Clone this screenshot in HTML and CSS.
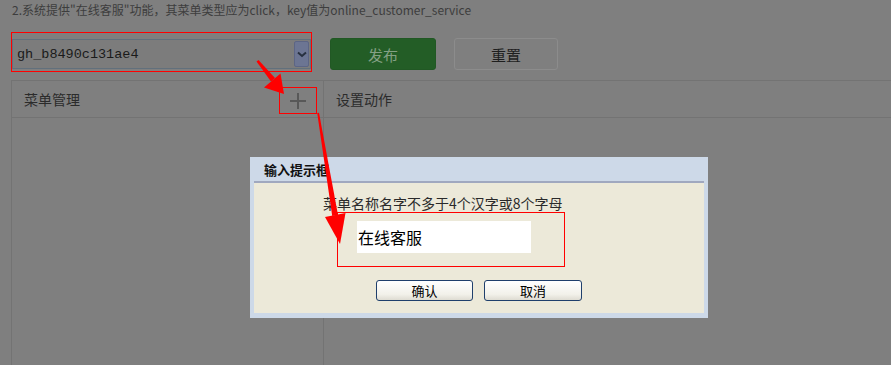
FILE: index.html
```html
<!DOCTYPE html>
<html lang="zh-CN">
<head>
<meta charset="utf-8">
<title>菜单管理</title>
<link rel="stylesheet" href="styles.css">
</head>
<body>
<p class="tip">2.系统提供"在线客服"功能，其菜单类型应为click，key值为online_customer_service</p>
<div class="toolbar">
  <div class="mark select-mark">
    <div class="select">
      <span class="select-value">gh_b8490c131ae4</span>
      <span class="drop"><svg width="10" height="7" viewBox="0 0 10 7"><path d="M1 1.5 L5 5 L9 1.5" fill="none" stroke="#27303f" stroke-width="2"/></svg></span>
    </div>
  </div>
  <button class="btn primary">发布</button>
  <button class="btn plain">重置</button>
</div>
<div class="panel">
  <div class="col left">
    <div class="col-head">
      <span>菜单管理</span>
      <span class="mark add-mark"><svg width="18" height="18" viewBox="0 0 18 18"><path d="M1 9 H17 M9 1 V17" stroke="#585858" stroke-width="2"/></svg></span>
    </div>
  </div>
  <div class="col right">
    <div class="col-head"><span>设置动作</span></div>
  </div>
</div>

<div class="dialog">
  <div class="dialog-title">输入提示框</div>
  <div class="dialog-body">
    <div class="prompt-text">菜单名称名字不多于4个汉字或8个字母</div>
    <div class="mark input-mark">
      <div class="input">在线客服</div>
    </div>
    <div class="dialog-actions">
      <button class="dbtn ok">确认</button>
      <button class="dbtn cancel">取消</button>
    </div>
  </div>
</div>

<svg class="arrows" width="891" height="365" viewBox="0 0 891 365">
  <polygon fill="#ff0000" points="256.5,61.5 258.5,60 275,78 271,81.5"/>
  <polygon fill="#ff0000" points="264,87.5 280.5,73.5 284,94"/>
  <polygon fill="#ff0000" points="317.2,113 319,112.8 338,215 332.2,216"/>
  <polygon fill="#ff0000" points="325,217 345.5,213 340,244"/>
</svg>
</body>
</html>
```

FILE: styles.css
```css
* { box-sizing: border-box; }

html, body {
  margin: 0;
  padding: 0;
  background: #7f7f7f;
  overflow: hidden;
}

body {
  width: 891px;
  height: 365px;
  position: relative;
  font-family: "Noto Sans CJK SC", "Noto Sans", sans-serif;
  color: #2a2a2a;
}

.tip {
  margin: 0;
  padding-left: 12px;
  height: 20px;
  line-height: 20px;
  font-size: 12px;
  color: #3d3d3d;
  white-space: nowrap;
}

.toolbar {
  display: flex;
  align-items: flex-start;
  gap: 18px;
  margin-top: 12px;
  padding-left: 11px;
  height: 40px;
}

.mark {
  border: 1px solid #ff0000;
}

.select-mark {
  width: 301px;
  height: 40px;
  padding: 6px 1px 2px 0;
}

.select {
  width: 299px;
  height: 30px;
  border: 1px solid #62707c;
  background: #7c7c7c;
  display: flex;
  align-items: center;
  justify-content: space-between;
  padding: 0 1px 0 4px;
}

.select-value {
  font-family: "Liberation Mono", monospace;
  font-size: 13.5px;
  color: #1a1a1a;
}

.drop {
  width: 15px;
  height: 26px;
  background: #6c7593;
  border: 1px solid #5c6585;
  border-radius: 2px;
  display: flex;
  align-items: center;
  justify-content: center;
}

.btn {
  margin-top: 6px;
  height: 32px;
  border-radius: 3px;
  font-family: "Noto Sans CJK SC", sans-serif;
  font-size: 15px;
  padding: 0;
}

.primary {
  width: 106px;
  background: #235d26;
  border: 1px solid #215824;
  color: #84a085;
}

.plain {
  width: 104px;
  background: #7f7f7f;
  border: 1px solid #8c8c8c;
  color: #1e1e1e;
}

.panel {
  margin-top: 8px;
  margin-left: 11px;
  height: 300px;
  border-top: 1px solid #737373;
  border-left: 1px solid #737373;
  display: flex;
}

.col {
  height: 100%;
}

.left {
  width: 312px;
  border-right: 1px solid #737373;
}

.right {
  flex: 1;
}

.col-head {
  height: 37px;
  border-bottom: 1px solid #737373;
  display: flex;
  align-items: center;
  justify-content: space-between;
  padding: 0 6px 0 12px;
  font-size: 14px;
  color: #2b2b2b;
}

.add-mark {
  width: 38px;
  height: 27px;
  display: flex;
  align-items: center;
  justify-content: center;
  align-self: flex-start;
  margin-top: 6px;
}

/* dialog overlay */
.dialog {
  position: absolute;
  left: 250px;
  top: 157px;
  width: 458px;
  height: 161px;
  background: #cdd9e8;
  padding: 0 4px 5px 4px;
  display: flex;
  flex-direction: column;
}

.dialog-title {
  height: 24px;
  line-height: 26px;
  padding-left: 10px;
  font-size: 13px;
  font-weight: bold;
  color: #111;
}

.dialog-body {
  flex: 1;
  background: #ece9d9;
  border-top: 2px solid #a0a8bf;
  display: flex;
  flex-direction: column;
}

.prompt-text {
  margin-top: 11px;
  padding-left: 69px;
  height: 18px;
  line-height: 18px;
  font-size: 14px;
  color: #2a2a2a;
  white-space: nowrap;
}

.input-mark {
  margin-left: 83px;
  width: 228px;
  height: 55px;
  padding: 8px 0 0 19px;
}

.input {
  width: 174px;
  height: 32px;
  background: #ffffff;
  line-height: 32px;
  padding-left: 1px;
  font-size: 16px;
  color: #000;
}

.dialog-actions {
  margin-top: 13px;
  display: flex;
  justify-content: center;
  gap: 11px;
}

.dbtn {
  height: 21px;
  padding: 0;
  border: 1px solid #1f3f6c;
  border-radius: 3px;
  background: linear-gradient(#ffffff, #f2f1ea 70%, #dedcd2);
  font-family: "Noto Sans CJK SC", sans-serif;
  font-size: 13px;
  line-height: 19px;
  color: #000;
}

.ok { width: 97px; }
.cancel { width: 98px; }

.arrows {
  position: absolute;
  left: 0;
  top: 0;
  pointer-events: none;
}
```
